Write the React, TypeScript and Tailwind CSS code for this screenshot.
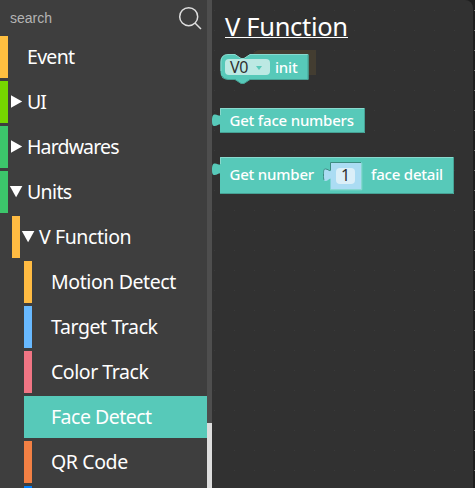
import React from "react";

type Row = {
  label: string;
  color: string;
  indent: string;
  tracking: string;
  arrow?: "right" | "down";
  selected?: boolean;
};

const rows: Row[] = [
  { label: "Event", color: "bg-[#ffbf40]", indent: "ml-0", tracking: "tracking-[-0.7px]" },
  { label: "UI", color: "bg-[#76d700]", indent: "ml-0", tracking: "tracking-[-0.9px]", arrow: "right" },
  { label: "Hardwares", color: "bg-[#3cc66b]", indent: "ml-0", tracking: "tracking-[-0.85px]", arrow: "right" },
  { label: "Units", color: "bg-[#3cc66b]", indent: "ml-0", tracking: "tracking-[-0.65px]", arrow: "down" },
  { label: "V Function", color: "bg-[#ffbb42]", indent: "ml-3", tracking: "tracking-[-0.4px]", arrow: "down" },
  { label: "Motion Detect", color: "bg-[#ffbb42]", indent: "ml-6", tracking: "tracking-[-0.4px]" },
  { label: "Target Track", color: "bg-[#68b9ff]", indent: "ml-6", tracking: "tracking-[-0.4px]" },
  { label: "Color Track", color: "bg-[#f07584]", indent: "ml-6", tracking: "tracking-[-0.45px]" },
  { label: "Face Detect", color: "bg-[#57c9b9]", indent: "ml-6", tracking: "tracking-[-0.5px]", selected: true },
  { label: "QR Code", color: "bg-[#f28044]", indent: "ml-6", tracking: "tracking-[-0.4px]" },
  { label: "", color: "bg-[#0080ff]", indent: "ml-6", tracking: "tracking-normal" },
];

function Arrow({ dir }: { dir?: "right" | "down" }) {
  return (
    <svg className="h-[14px] w-[19px] shrink-0" viewBox="0 0 19 14" fill="#fff">
      {dir === "right" && <path d="M3 0.2 L14.2 6.4 L3 12.8 Z" />}
      {dir === "down" && <path d="M1.8 1 L14.4 1 L8.1 12.3 Z" />}
    </svg>
  );
}

function TreeRow({ row }: { row: Row }) {
  return (
    <div className={`flex h-[42px] shrink-0 items-center ${row.indent} ${row.selected ? "bg-[#57c9b9]" : ""}`}>
      <div className={`h-full w-2 shrink-0 ${row.color}`} />
      <Arrow dir={row.arrow} />
      <span className={`whitespace-nowrap text-[19.5px] leading-6 ${row.tracking}`}>{row.label}</span>
    </div>
  );
}

function Sidebar() {
  return (
    <div className="flex h-full w-[212px] shrink-0 bg-[#3e3e3e]">
      <div className="flex w-[207px] flex-col overflow-hidden">
        <div className="flex h-9 shrink-0 items-center justify-between pl-[10px] pr-[5px]">
          <span className="font-['Liberation_Sans',sans-serif] text-sm text-[#b4b4b4]">search</span>
          <svg className="h-6 w-6" viewBox="0 0 24 24" fill="none" stroke="#dedede" strokeWidth="1.5">
            <circle cx="10.7" cy="10.7" r="9" />
            <path d="M17 17 L23 23" />
          </svg>
        </div>
        <div className="flex flex-col gap-[3px]">
          {rows.map((row, i) => (
            <TreeRow key={i} row={row} />
          ))}
        </div>
      </div>
      <div className="flex w-[5px] flex-col justify-end bg-[#4e4e4e]">
        <div className="h-[65px] bg-[#dddddd]" />
      </div>
    </div>
  );
}

function Canvas() {
  return (
    <div className="relative h-full flex-1 overflow-hidden bg-[#1e1e1e] bg-[radial-gradient(circle_at_2.5px_10.5px,#777_0.8px,transparent_1px)] bg-[size:20px_20px]">
      <div className="h-full w-[261px] rounded-tr-[8px] bg-[#313131] bg-[radial-gradient(circle_at_2.5px_10.5px,#3a3a3a_0.8px,transparent_1px)] bg-[size:20px_20px]">
        <h1 className="pl-[13px] pt-2 text-[25.5px] leading-[36px] text-white">
          <span className="inline-block h-[30px] whitespace-nowrap border-b border-white tracking-[-0.32px]">V Function</span>
        </h1>
      </div>

      <div className="absolute left-[40px] top-[50px] h-[25px] w-[64px] rounded-tl-lg bg-[#433d31]" />

      <div className="absolute left-2 top-[53px] h-[32px] w-[90px]">
        <svg className="absolute inset-0" width="90" height="32" viewBox="0 0 90 32">
          <path d="M0.5 9 Q0.5 1.5 8 1.5 H15 L21 5.5 H24 L30 1.5 H88.5 V26.5 H30 L24 30.5 H21 L15 26.5 H8 Q0.5 26.5 0.5 19 Z" fill="#57c9b9" />
          <path d="M1 18 V9 Q1 1.5 8 1.5 H15 L21 5.5 H24 L30 1.5 H88" fill="none" stroke="#89d9ce" />
          <path d="M88 1.5 V26.5 H30 L24 30.5 H21 L15 26.5 H8 Q4 26.5 2 23" fill="none" stroke="#46a194" />
        </svg>
        <div className="relative flex h-7 items-center pl-[5px]">
          <div className="flex h-4 w-[45px] items-center rounded bg-[#bce9e3] pb-px pl-[5px]">
            <span className="w-5 text-base leading-4 tracking-[-0.3px] text-[#303030]">V0</span>
            <svg className="ml-[6px] mt-0.5 h-1 w-1.5" viewBox="0 0 6 4"><path d="M0 0 H6 L3 4 Z" fill="#57c9b9" /></svg>
          </div>
          <span className="ml-[5px] text-[15px] font-medium leading-5 tracking-[-0.2px] text-white">init</span>
        </div>
      </div>

      <div className="absolute left-0 top-[108px] h-[25px] w-[153px]">
        <svg className="absolute inset-0" width="153" height="25" viewBox="0 0 153 25">
          <path d="M8 0 H153 V25 H8 V17 C8 15 6 18 2.5 18 C0.8 18 0 17 0 13 C0 8 0.8 6.5 3 6.5 C6 6.5 8 9 8 7 Z" fill="#57c9b9" />
          <path d="M8.5 7 V0.5 H152" fill="none" stroke="#89d9ce" />
          <path d="M152.5 0 V24.5 H8" fill="none" stroke="#46a194" />
        </svg>
        <span className="relative block whitespace-nowrap pl-[17.5px] text-[15px] font-medium leading-[25px] tracking-[-0.2px] text-white">Get face numbers</span>
      </div>

      <div className="absolute left-0 top-[157px] h-[37px] w-[242px]">
        <svg className="absolute inset-0" width="242" height="37" viewBox="0 0 242 37">
          <path d="M8 0 H242 V37 H8 V17 C8 15 6 18 2.5 18 C0.8 18 0 17 0 13 C0 8 0.8 6.5 3 6.5 C6 6.5 8 9 8 7 Z" fill="#57c9b9" />
          <path d="M8.5 7 V0.5 H241" fill="none" stroke="#89d9ce" />
          <path d="M241.5 0 V36.5 H8" fill="none" stroke="#46a194" />
          <path d="M118.5 5.5 H149.5 V32.5 H118.5 V22 C118.5 20 116 24 113.5 24 C111.5 24 111.5 21 111.5 18 C111.5 14 111.5 12 113.5 12 C116 12 118.5 15 118.5 13 Z" fill="#abdcf3" />
          <path d="M149 5.5 H118.5 V13 C118.5 15 116 12 113.5 12 C111.5 12 111.5 14 111.5 18 C111.5 20 111.5 22 112 23" fill="none" stroke="#3c8d82" />
          <path d="M149.8 6 V32.8 H118" fill="none" stroke="#89d9ce" />
        </svg>
        <div className="relative flex h-[35px] items-center whitespace-nowrap pl-[17.5px] text-[15px] font-medium tracking-[-0.2px] text-white">
          <span className="w-[106.5px]">Get number</span>
          <span className="mt-[3px] h-4 w-[19px] rounded bg-[#dbeff8] text-center text-base font-normal leading-[15px] text-[#303030]">1</span>
          <span className="ml-4">face detail</span>
        </div>
      </div>
    </div>
  );
}

export default function App() {
  return (
    <div className="flex h-[488px] w-[475px] overflow-hidden bg-[#1e1e1e] font-['Noto_Sans',sans-serif] text-white">
      <Sidebar />
      <Canvas />
    </div>
  );
}
